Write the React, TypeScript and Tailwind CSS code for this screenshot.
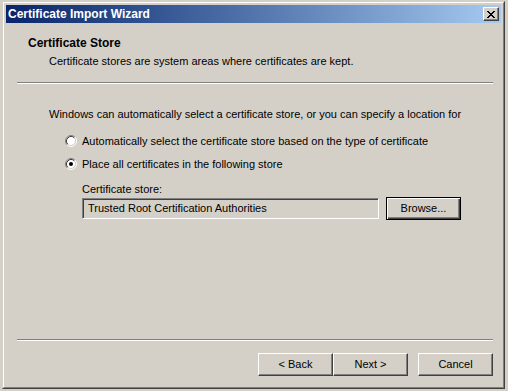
const face = "font-['Liberation_Sans',Arial,sans-serif] text-[11px] leading-[13px] text-black";

const Radio = ({ checked }: { checked?: boolean }) => (
  <svg width="12" height="12" viewBox="0 0 12 12" className="shrink-0">
    <circle cx="6" cy="6" r="4.5" fill="#ffffff" />
    <path d="M2.11 9.89 A5.5 5.5 0 0 1 9.89 2.11" fill="none" stroke="#808080" />
    <path d="M9.89 2.11 A5.5 5.5 0 0 1 2.11 9.89" fill="none" stroke="#ffffff" />
    <path d="M2.82 9.18 A4.5 4.5 0 0 1 9.18 2.82" fill="none" stroke="#404040" />
    <path d="M9.18 2.82 A4.5 4.5 0 0 1 2.82 9.18" fill="none" stroke="#d4d0c8" />
    {checked && <circle cx="6" cy="6" r="2" fill="#000000" />}
  </svg>
);

const CloseGlyph = () => {
  const rows = ["11000011", "01100110", "00111100", "00011000", "00111100", "01100110", "11000011"];
  return (
    <svg width="8" height="7" viewBox="0 0 8 7" shapeRendering="crispEdges">
      {rows.map((r, y) =>
        r.split("").map((c, x) => (c === "1" ? <rect key={`${x}-${y}`} x={x} y={y} width="1" height="1" fill="#000" /> : null))
      )}
    </svg>
  );
};

const Button = ({ label, isDefault }: { label: string; isDefault?: boolean }) =>
  isDefault ? (
    <button className={`${face} w-[75px] h-[23px] flex items-center justify-center bg-[#d4d0c8] border border-black shadow-[inset_1px_1px_0_#ffffff,inset_-1px_-1px_0_#404040,inset_-2px_-2px_0_#808080]`}>
      {label}
    </button>
  ) : (
    <button className={`${face} w-[75px] h-[23px] flex items-center justify-center bg-[#d4d0c8] border border-t-white border-l-white border-r-[#404040] border-b-[#404040] shadow-[inset_-1px_-1px_0_#808080,inset_1px_1px_0_#d4d0c8]`}>
      {label}
    </button>
  );

const Separator = () => (
  <div className="ml-[11px] mr-[8px] h-[2px] border-t border-t-[#808080] border-b border-b-white" />
);

export default function App() {
  return (
    <div className="w-[508px] h-[391px] bg-[#d4d0c8] pt-[1px] pl-[2px] overflow-hidden">
      <div className="w-[503px] h-[388px] border border-t-[#d4d0c8] border-l-[#d4d0c8] border-r-[#404040] border-b-[#404040]">
        <div className="h-full flex flex-col border border-t-white border-l-white border-r-[#808080] border-b-[#808080] p-[2px] bg-[#d4d0c8]">
          <div className="h-[18px] flex items-center justify-between pl-[2px] pr-[2px] bg-linear-to-r from-[#0a246a] to-[#a6caf0]">
            <span className="font-['Liberation_Sans',Arial,sans-serif] text-[12px] font-bold text-white leading-[14px]">
              Certificate Import Wizard
            </span>
            <div className="w-[16px] h-[14px] flex items-center justify-center bg-[#d4d0c8] border border-t-white border-l-white border-r-[#404040] border-b-[#404040] shadow-[inset_-1px_-1px_0_#808080]">
              <CloseGlyph />
            </div>
          </div>

          <div className="flex-1 flex flex-col">
            <div className="pt-[14px] pl-[22px]">
              <div className="font-['Liberation_Sans',Arial,sans-serif] text-[12px] leading-[13px] font-bold text-black">
                Certificate Store
              </div>
              <div className={`${face} mt-[5px] pl-[21px]`}>
                Certificate stores are system areas where certificates are kept.
              </div>
            </div>
            <div className="mt-[14px]">
              <Separator />
            </div>

            <div className="pl-[43px] pt-[24px]">
              <div className={face}>
                Windows can automatically select a certificate store, or you can specify a location for
              </div>
              <div className="pl-[16px]">
                <div className="mt-[14px] h-[12px] flex items-center gap-[5px]">
                  <Radio />
                  <span className={face}>Automatically select the certificate store based on the type of certificate</span>
                </div>
                <div className="mt-[11px] h-[12px] flex items-center gap-[5px]">
                  <Radio checked />
                  <span className={face}>Place all certificates in the following store</span>
                </div>
                <div className="pl-[17px]">
                  <div className={`${face} mt-[13px]`}>Certificate store:</div>
                  <div className="mt-[1px] flex items-center gap-[7px]">
                    <div className="w-[297px] h-[21px] flex items-center border border-t-[#808080] border-l-[#808080] border-r-white border-b-white shadow-[inset_1px_1px_0_#404040,inset_-1px_-1px_0_#d4d0c8] bg-[#d4d0c8] pl-[5px]">
                      <span className={face}>Trusted Root Certification Authorities</span>
                    </div>
                    <Button label="Browse..." isDefault />
                  </div>
                </div>
              </div>
            </div>

            <div className="mt-auto">
              <Separator />
              <div className="flex justify-end pr-[8px] pt-[12px] pb-[9px]">
                <Button label="< Back" />
                <Button label="Next >" />
                <div className="w-[10px]" />
                <Button label="Cancel" />
              </div>
            </div>
          </div>
        </div>
      </div>
    </div>
  );
}
